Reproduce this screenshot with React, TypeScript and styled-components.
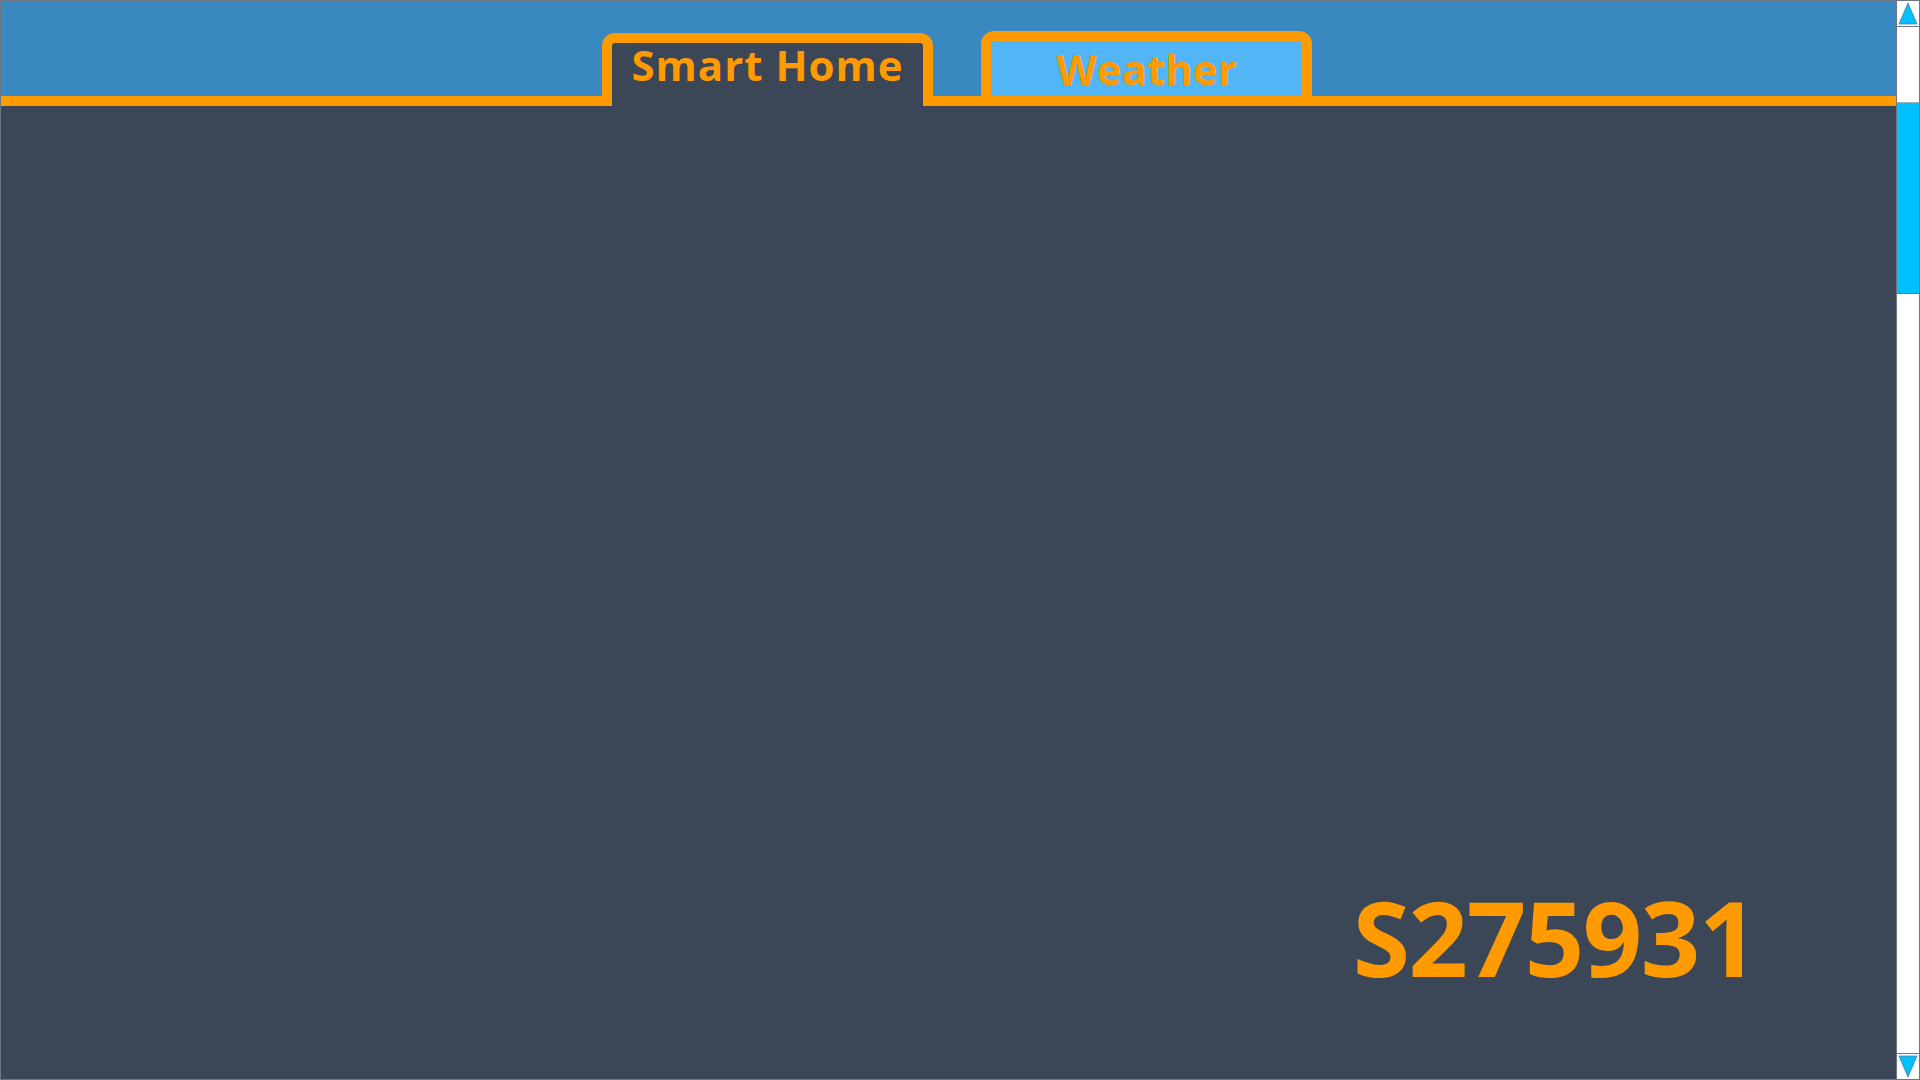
import React from 'react'
import styled, { createGlobalStyle } from 'styled-components'

const GlobalStyle = createGlobalStyle`
  html, body {
    margin: 0;
    padding: 0;
    overflow: hidden;
  }
  body {
    font-family: 'Open Sans', 'Noto Sans', 'Liberation Sans', sans-serif;
  }
`

const ORANGE = '#ff9a00'
const FRAME = '#6d7683'

const Window = styled.div`
  display: flex;
  width: 1920px;
  height: 1080px;
  box-sizing: border-box;
  border-left: 1px solid ${FRAME};
  border-top: 1px solid ${FRAME};
  border-bottom: 1px solid ${FRAME};
  background: #3b4657;
`

const Main = styled.div`
  flex: 1;
  display: flex;
  flex-direction: column;
  min-width: 0;
`

const TabBar = styled.div`
  height: 95px;
  flex-shrink: 0;
  display: flex;
  align-items: flex-end;
  gap: 48px;
  padding-left: 601px;
  background: #3a88c0;
  border-bottom: 10px solid ${ORANGE};
`

const Tab = styled.div<{ $active?: boolean }>`
  box-sizing: border-box;
  width: 331px;
  height: ${p => (p.$active ? '73px' : '65px')};
  margin-bottom: ${p => (p.$active ? '-10px' : '0')};
  border: 10px solid ${ORANGE};
  border-bottom: none;
  border-radius: 13px 13px 0 0;
  background: ${p => (p.$active ? '#3b4657' : '#52b5f6')};
  display: flex;
  justify-content: center;
  align-items: flex-start;
  padding-top: ${p => (p.$active ? '1px' : '7px')};
  color: ${ORANGE};
  font-weight: 700;
  font-size: 42px;
  letter-spacing: ${p => (p.$active ? '1px' : '0')};
  line-height: 1;
  white-space: nowrap;
`

const Content = styled.div`
  flex: 1;
  display: flex;
  justify-content: flex-end;
  align-items: flex-end;
  padding: 0 139px 90px 0;
  background: #3b4657;
`

const Code = styled.div`
  color: ${ORANGE};
  font-size: 104px;
  font-weight: 700;
  line-height: 1;
  letter-spacing: -1.4px;
`

const ScrollBar = styled.div`
  width: 24px;
  flex-shrink: 0;
  box-sizing: border-box;
  display: flex;
  flex-direction: column;
  background: #ffffff;
  border-left: 1px solid ${FRAME};
  border-right: 1px solid ${FRAME};
`

const ArrowButton = styled.div<{ $down?: boolean }>`
  height: 26px;
  flex-shrink: 0;
  display: flex;
  align-items: center;
  justify-content: center;
  box-sizing: border-box;
  border-top: ${p => (p.$down ? `1px solid ${FRAME}` : 'none')};
  border-bottom: ${p => (p.$down ? 'none' : `1px solid ${FRAME}`)};
`

const Track = styled.div`
  flex: 1;
  padding-top: 75px;
`

const Thumb = styled.div`
  height: 192px;
  background: #00c0ff;
  border-top: 1px solid #9fb3c2;
  border-bottom: 1px solid ${FRAME};
  box-sizing: border-box;
`

const Arrow = ({ down }: { down?: boolean }) => (
  <svg width="20" height="23" viewBox="0 0 20 23">
    <polygon
      points={down ? '1,1 19,1 10,22' : '10,1 19,22 1,22'}
      fill="#00c0ff"
      stroke="#5a7a90"
      strokeWidth="0.8"
    />
  </svg>
)

export default function App() {
  return (
    <>
      <GlobalStyle />
      <Window>
        <Main>
          <TabBar>
            <Tab $active>Smart Home</Tab>
            <Tab>Weather</Tab>
          </TabBar>
          <Content>
            <Code>S275931</Code>
          </Content>
        </Main>
        <ScrollBar>
          <ArrowButton>
            <Arrow />
          </ArrowButton>
          <Track>
            <Thumb />
          </Track>
          <ArrowButton $down>
            <Arrow down />
          </ArrowButton>
        </ScrollBar>
      </Window>
    </>
  )
}
